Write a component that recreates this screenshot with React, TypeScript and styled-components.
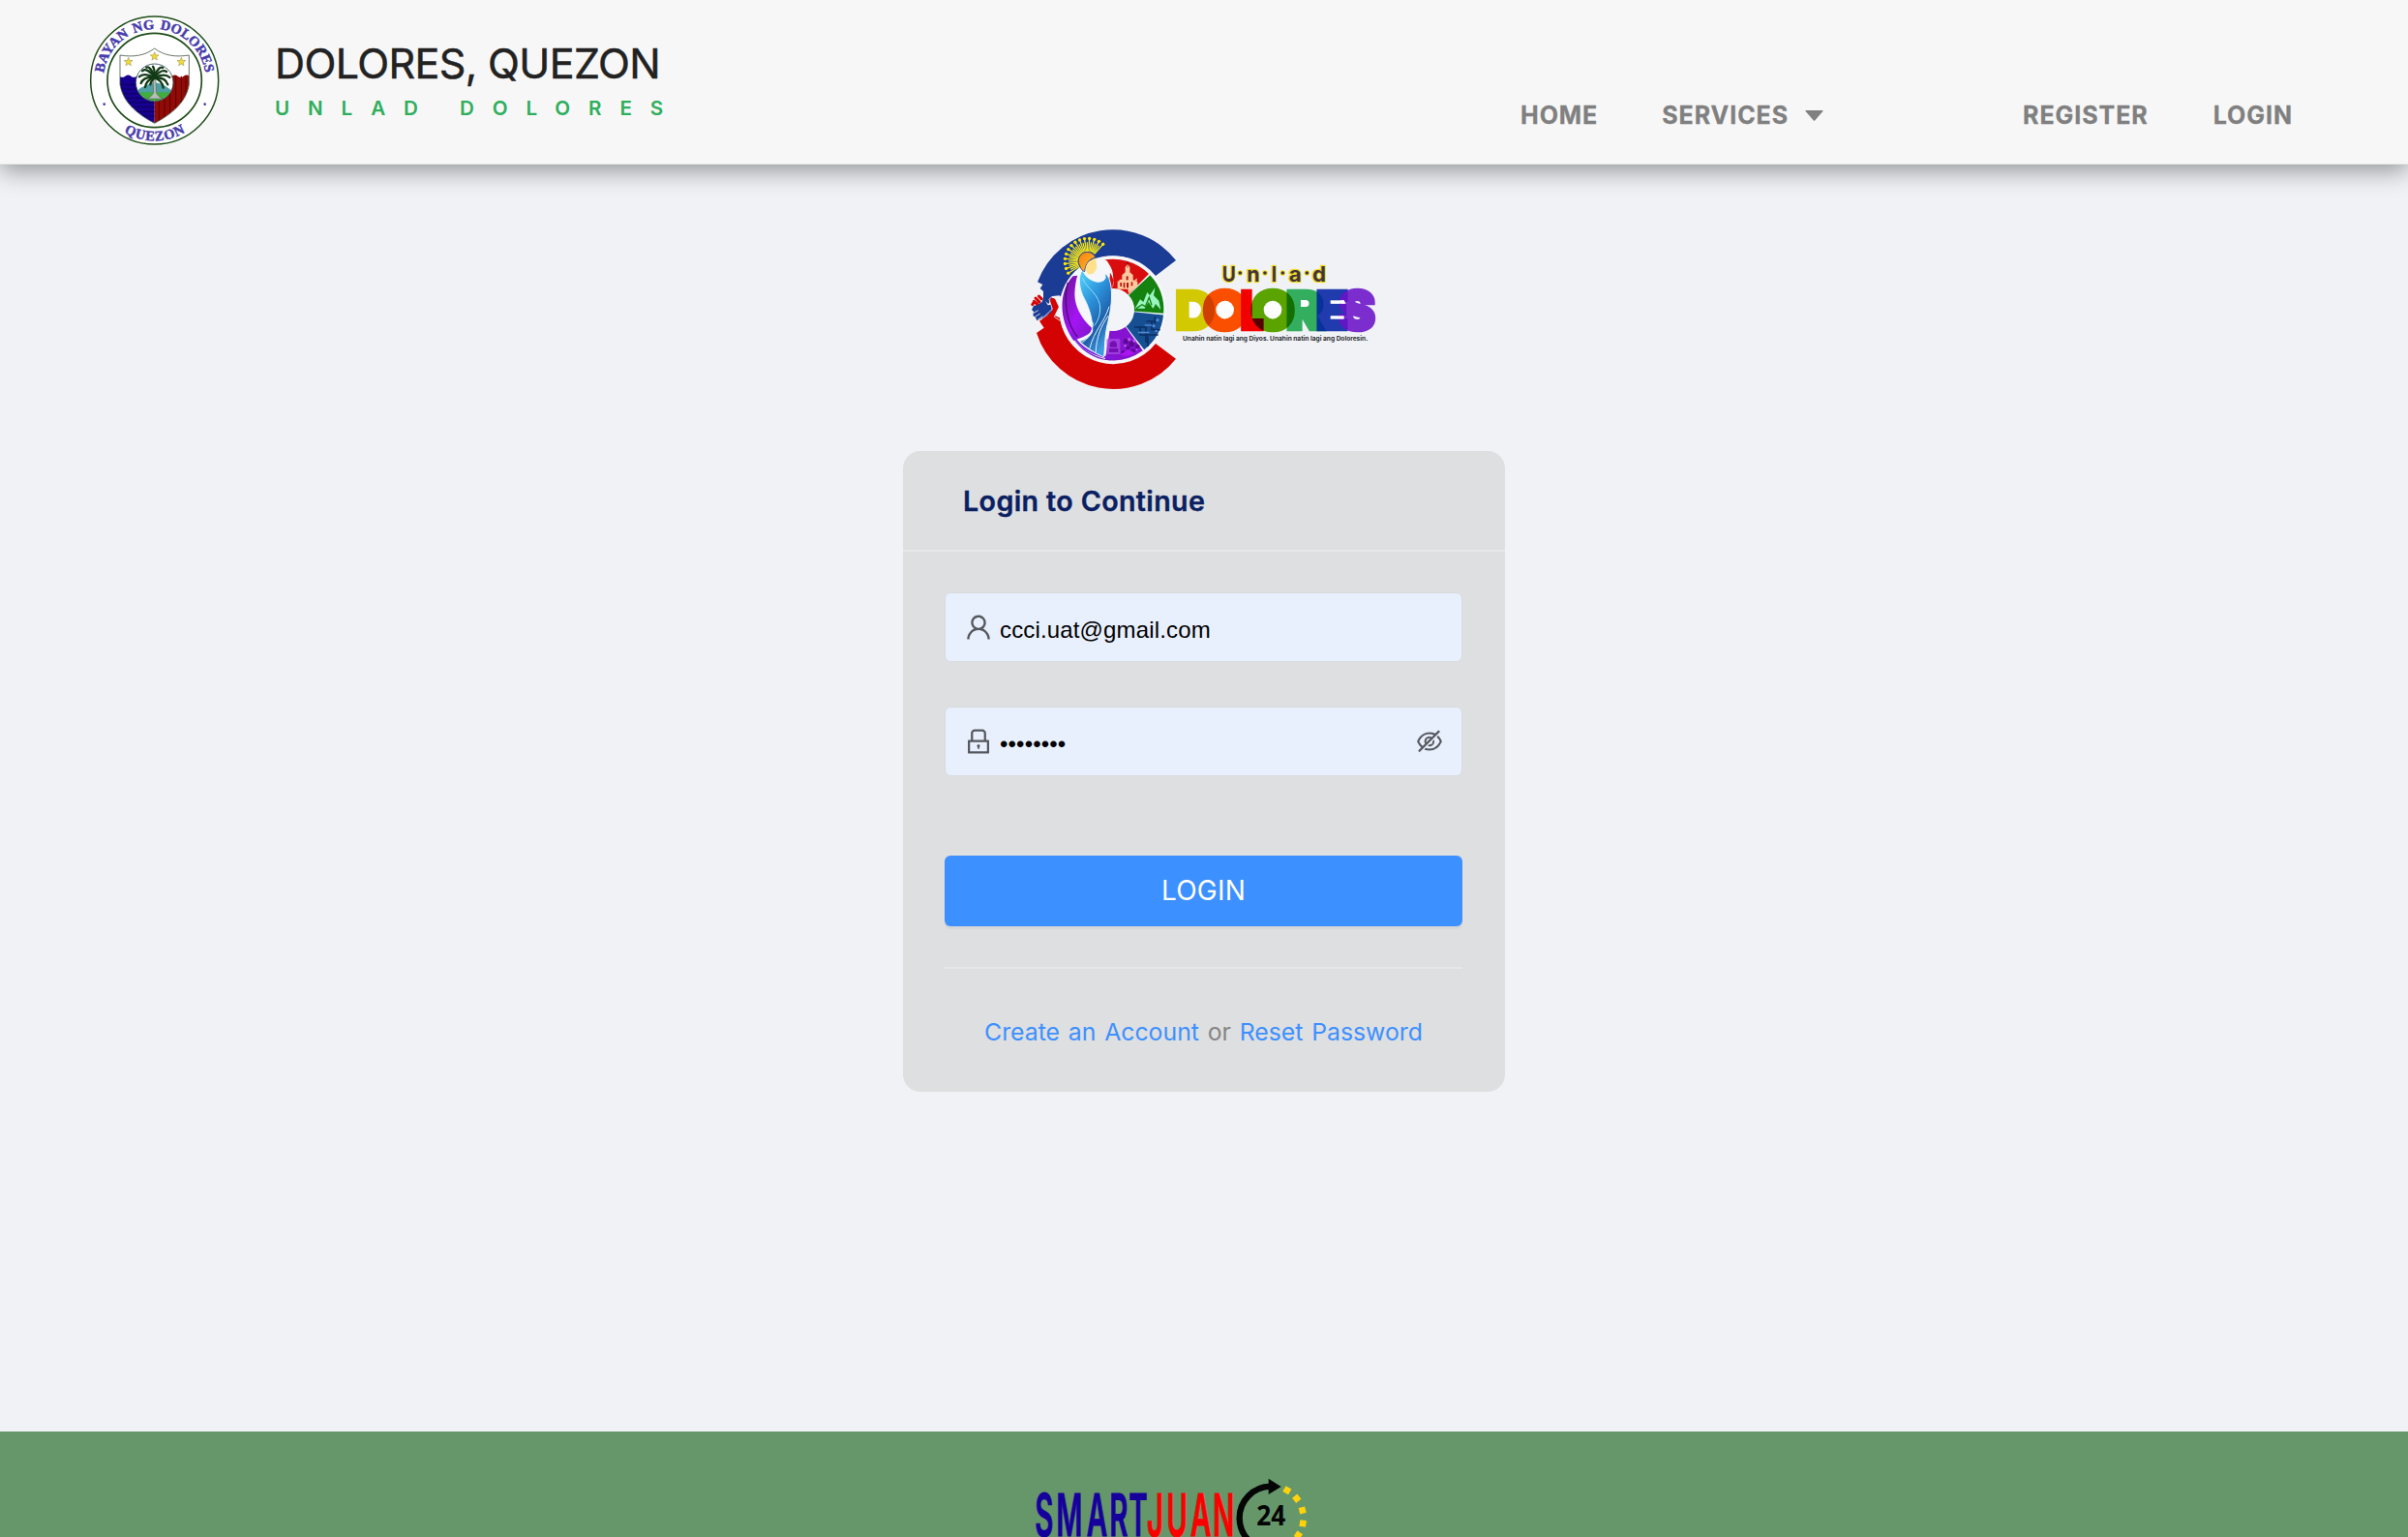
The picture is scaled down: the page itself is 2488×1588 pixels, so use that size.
import React, { useState } from "react";
import styled, { createGlobalStyle } from "styled-components";
import { AiOutlineEyeInvisible, AiOutlineLock, AiOutlineUser } from "react-icons/ai";

const GlobalStyle = createGlobalStyle`
  *, *::before, *::after { box-sizing: border-box; }
  body {
    margin: 0;
    background: #f0f2f6;
    font-family: Inter, "Liberation Sans", sans-serif;
    -webkit-font-smoothing: antialiased;
  }
`;

const Page = styled.div`
  display: flex;
  flex-direction: column;
  height: 1588px;
  overflow: hidden;
`;

const Header = styled.header`
  display: flex;
  align-items: flex-start;
  height: 170px;
  flex: none;
  padding: 0 119px 0 80px;
  background: #f7f7f7;
  border-bottom: 1px solid #e6e6e6;
  box-shadow: 0 6px 24px rgba(0, 0, 0, 0.4);
  z-index: 1;
`;

const Brand = styled.div`
  display: flex;
  flex-direction: column;
  gap: 6px;
  padding-top: 40px;
  margin-left: 44px;
`;

const BrandTitle = styled.div`
  font-size: 43px;
  line-height: 50px;
  letter-spacing: -0.6px;
  color: #222;
  -webkit-text-stroke: 0.5px #222;
  white-space: nowrap;
`;

const BrandTagline = styled.div`
  font-size: 20.6px;
  font-weight: 600;
  line-height: 31px;
  letter-spacing: 18.9px;
  color: #2fae5c;
  white-space: nowrap;
`;

const Nav = styled.nav`
  display: flex;
  align-items: center;
  height: 40px;
  margin: 99px 0 0 auto;
`;

const NavLink = styled.a<{ $gap?: number }>`
  display: flex;
  align-items: center;
  gap: 17px;
  margin-left: ${(p) => p.$gap ?? 0}px;
  font-size: 25px;
  font-weight: 700;
  line-height: 40px;
  letter-spacing: 0.95px;
  color: #808080;
  -webkit-text-stroke: 0.3px #808080;
`;

const Main = styled.main`
  display: flex;
  flex: 1;
  flex-direction: column;
  align-items: center;
  padding-top: 50px;
`;

const Card = styled.section`
  width: 622px;
  margin-top: 46px;
  border-radius: 18px;
  background: #dedfe0;
`;

const CardHeader = styled.h1`
  height: 104px;
  margin: 0;
  padding-left: 62px;
  border-bottom: 2px solid #e6e7e8;
  font-size: 28.6px;
  font-weight: 600;
  line-height: 103px;
  letter-spacing: 0.4px;
  color: #0b1f63;
  -webkit-text-stroke: 0.4px #0b1f63;
`;

const CardBody = styled.form`
  display: flex;
  flex-direction: column;
  padding: 42px 44px 42px 43px;
`;

const Field = styled.label`
  display: flex;
  align-items: center;
  height: 72px;
  margin: 0 0 46px;
  padding: 0 18px;
  border: 1px solid #d9dbdc;
  border-radius: 6px;
  background: #e8effd;
  color: #55585d;
`;

const TextInput = styled.input`
  flex: 1;
  min-width: 0;
  height: 40px;
  margin-left: 6px;
  padding: 5px 0 0;
  border: 0;
  outline: 0;
  background: transparent;
  color: #000;
  font: 24px "Liberation Sans", sans-serif;
  letter-spacing: 0.15px;
`;

const Submit = styled.button`
  height: 73px;
  margin-top: 36px;
  padding: 0;
  border: 0;
  border-radius: 6px;
  background: #3d90ff;
  box-shadow: 0 3px 1px rgba(0, 0, 0, 0.045);
  color: #fff;
  font: 400 28px/73px Inter, sans-serif;
  letter-spacing: 0.2px;
`;

const Divider = styled.hr`
  width: 100%;
  height: 2px;
  margin: 42px 0 45px;
  border: 0;
  background: #e6e7e8;
`;

const Links = styled.div`
  font-size: 24.8px;
  line-height: 40px;
  text-align: center;
  color: #858585;
  word-spacing: 1.8px;
`;

const TextLink = styled.a`
  color: #3d90ff;
`;

const Footer = styled.footer`
  display: flex;
  justify-content: center;
  height: 109px;
  flex: none;
  background: #66976b;
`;

const Art = styled.svg`
  display: block;
  flex: none;
`;

function star(cx: number, cy: number, r: number) {
  return Array.from({ length: 10 }, (_, i) => {
    const a = -Math.PI / 2 + (i * Math.PI) / 5;
    const k = i % 2 ? r * 0.42 : r;
    return `${(cx + k * Math.cos(a)).toFixed(1)},${(cy + k * Math.sin(a)).toFixed(1)}`;
  }).join(" ");
}

const SHIELD =
  "M132 171 C175 178 210 172 239 150 C268 172 303 178 346 171 V262 C338 312 300 350 239 382 C178 350 140 312 132 262 Z";

function TownSeal() {
  return (
    <Art width="160" height="169" viewBox="0 0 480 507" role="img">
      <defs>
        <path id="sealTop" d="M80 249 A159 159 0 0 1 398 249" />
        <path id="sealBottom" d="M52 249 A187 187 0 0 0 426 249" />
        <clipPath id="shieldClip"><path d={SHIELD} /></clipPath>
        <clipPath id="medalClip"><circle cx="239" cy="256" r="57" /></clipPath>
      </defs>
      <circle cx="239" cy="249" r="198" fill="#fff" stroke="#1f4d19" strokeWidth="4.5" />
      <circle cx="239" cy="249" r="146" fill="#fff" stroke="#1f4d19" strokeWidth="5" />
      <g fill="#473cab" stroke="#473cab" strokeWidth="1.4" fontFamily="'Liberation Serif', serif" fontWeight="700" fontSize="43">
        <text textAnchor="middle" wordSpacing="6">
          <textPath href="#sealTop" startOffset="50%">BAYAN NG DOLORES</textPath>
        </text>
        <text textAnchor="middle" letterSpacing="2.5">
          <textPath href="#sealBottom" startOffset="50.3%">QUEZON</textPath>
        </text>
      </g>
      <circle cx="83" cy="323" r="4" fill="#473cab" />
      <circle cx="395" cy="323" r="4" fill="#473cab" />
      <g clipPath="url(#shieldClip)">
        <rect x="130" y="148" width="218" height="236" fill="#fff" />
        <path d="M130 236 q9 7 18 0 t18 0 t18 0 t18 0 t18 0 t19 0 V384 H130 Z" fill="#17008f" />
        <path d="M239 236 q9 7 18 0 t18 0 t18 0 t18 0 t18 0 t19 0 V384 H239 Z" fill="#930b06" />
        <g stroke="#0b0052" strokeWidth="2.5">
          {[262, 276, 290, 304, 318, 332, 346, 360].map((y) => (
            <line key={y} x1="130" x2="239" y1={y} y2={y} />
          ))}
        </g>
        <g stroke="#5a0502" strokeWidth="3">
          {[253, 270, 287, 305, 322, 336].map((x) => (
            <line key={x} y1="236" y2="384" x1={x} x2={x} />
          ))}
        </g>
      </g>
      <path d={SHIELD} fill="none" stroke="#4c5a4c" strokeWidth="2.5" />
      {[[158, 192], [239, 175], [322, 192]].map(([x, y]) => (
        <polygon key={x} points={star(x, y, 14)} fill="#f5db2c" stroke="#8c8450" strokeWidth="1.5" />
      ))}
      <circle cx="239" cy="256" r="58" fill="#fff" />
      <g clipPath="url(#medalClip)">
        <path d="M180 286 L196 272 L214 264 L236 254 L252 258 L272 266 L300 286 V290 H180 Z" fill="#4f9fa5" />
        <rect x="180" y="286" width="120" height="34" fill="#3fae3c" />
        <path d="M215 306 Q232 300 236 286 L234 226 H242 L244 286 Q248 300 266 306 Z" fill="#b9bfb6" stroke="#4d554c" strokeWidth="1.5" />
      </g>
      <circle cx="239" cy="256" r="58" fill="none" stroke="#2b4a55" strokeWidth="2.5" />
      <g fill="none" stroke="#123a16" strokeWidth="7" strokeLinecap="round">
        <path d="M239 238 Q214 208 201 220" />
        <path d="M239 236 Q225 204 214 209" />
        <path d="M239 236 Q240 216 234 206" />
        <path d="M239 236 Q252 204 265 210" />
        <path d="M239 238 Q262 212 276 222" />
        <path d="M239 240 Q204 224 192 238" />
        <path d="M239 240 Q272 226 286 240" />
        <path d="M239 241 Q206 236 197 258" />
        <path d="M239 241 Q272 238 280 262" />
        <path d="M239 241 Q214 246 210 270" />
        <path d="M239 241 Q262 248 266 272" />
        <path d="M239 241 Q226 254 226 262" />
      </g>
    </Art>
  );
}

const WORD: { ch: string; x: number; w: number; fill: string; over?: boolean }[] = [
  { ch: "D", x: 44, w: 119, fill: "#d3c903" },
  { ch: "O", x: 130, w: 134, fill: "#fb4f00" },
  { ch: "L", x: 246, w: 69, fill: "#f40000" },
  { ch: "O", x: 279, w: 133, fill: "#5ba400" },
  { ch: "R", x: 388, w: 114, fill: "#33ae5f" },
  { ch: "E", x: 481, w: 97, fill: "#0322a3", over: true },
  { ch: "S", x: 551, w: 110, fill: "#6b12c9", over: true },
];

const UNLAD: [string, number, number][] = [
  ["U", 188, 42], ["n", 265, 40], ["l", 341, 16], ["a", 395, 39], ["d", 468, 42],
];

function polar(cx: number, cy: number, r: number, deg: number): [number, number] {
  const a = (deg * Math.PI) / 180;
  return [cx + r * Math.cos(a), cy + r * Math.sin(a)];
}

function wedge(from: number, to: number) {
  const [ax, ay] = polar(300, 300, 157, from);
  const [bx, by] = polar(300, 300, 157, to);
  const [cx, cy] = polar(300, 300, 65, to);
  const [dx, dy] = polar(300, 300, 65, from);
  return `M${ax} ${ay} A157 157 0 0 1 ${bx} ${by} L${cx} ${cy} A65 65 0 0 0 ${dx} ${dy} Z`;
}

function UnladDoloresLogo() {
  return (
    <Art width="388" height="200" viewBox="0 0 1164 600" role="img">
      <defs>
        <linearGradient id="robe" x1="0" y1="0" x2="0.5" y2="1">
          <stop offset="0" stopColor="#55d9ff" />
          <stop offset="0.45" stopColor="#2a8fd8" />
          <stop offset="0.75" stopColor="#1f5fa8" />
          <stop offset="1" stopColor="#3f9be0" />
        </linearGradient>
        <linearGradient id="veil" x1="0" y1="0" x2="1" y2="1">
          <stop offset="0" stopColor="#6a1494" />
          <stop offset="0.55" stopColor="#a514f5" />
          <stop offset="1" stopColor="#7a16c4" />
        </linearGradient>
        <linearGradient id="halo" x1="0" y1="0" x2="1" y2="1">
          <stop offset="0" stopColor="#f77f0c" />
          <stop offset="1" stopColor="#ffc02e" />
        </linearGradient>
      </defs>

      <path d="M495 147 A249 249 0 0 0 66 214 L82 222 L74 234 L84 243 L84 268 L100 282 L112 258 L134 256 L140 262 A167 167 0 0 1 432 195 Z" fill="#1b3c94" />
      <path d="M495 452 A249 249 0 0 1 63 372 L86 356 L72 335 L96 318 L112 300 L104 276 L108 262 L120 266 L132 292 L120 318 L136 326 A167 167 0 0 0 432 405 Z" fill="#d40303" />
      <path d="M84 262 L98 286 L110 284 L110 306 L84 326 L64 334 L60 324 L52 318 L54 306 L48 300 L54 288 L66 284 L80 276 Z" fill="#1b3c94" />
      <g stroke="#f0f2f6" strokeWidth="2.5" fill="none">
        <path d="M54 310 L68 302 M58 322 L74 312 M66 332 L82 320" />
        <path d="M112 258 L102 268 L112 298 L86 322 L72 332 M134 290 L118 322 L136 334" />
      </g>
      <g stroke="#d40303" strokeWidth="9" strokeLinecap="round">
        <path d="M50 284 L56 276 M55 274 L65 282 M60 264 L72 276 M70 258 L78 266" />
      </g>

      <circle cx="299" cy="299" r="166" fill="#f6f7fa" />
      <path d={wedge(-103, -45)} fill="#d90d0d" />
      <path d={wedge(-43, 4)} fill="#15820f" />
      <path d={wedge(6, 52)} fill="#174f93" />
      <path d={wedge(54, 99)} fill="#8613cf" />
      <g fill="#ffc9a0">
        <path d="M314 236 V212 L328 206 V192 L338 184 V168 L345 158 L352 168 V184 L362 192 V208 L376 214 V226 L348 250 L346 236 L338 236 Z" />
        <path d="M312 214 h8 v-8 h6 v10 z M366 210 l8 -8 v10 z" />
      </g>
      <g fill="#b3150f">
        <rect x="341" y="196" width="6" height="12" />
        <rect x="322" y="216" width="5" height="12" />
        <rect x="332" y="216" width="5" height="16" />
        <rect x="342" y="216" width="6" height="16" />
        <rect x="356" y="214" width="5" height="12" />
      </g>
      <path d="M345 150 V170 M340 156 H350" stroke="#7a0d0d" strokeWidth="2" />
      <path d="M368 296 L384 268 L394 276 L406 246 L414 256 L430 232 L426 256 L442 272 L448 300 L432 282 L424 296 L410 276 L398 296 Z" fill="#9af5c0" />
      <path d="M372 296 L390 284 L400 290 L412 262 L420 286" fill="none" stroke="#15820f" strokeWidth="4" />
      <g fill="none" stroke="#0d2f66" strokeWidth="5">
        <path d="M366 354 H402 V402 M384 354 V378 H440 M420 334 V362 H446 M408 382 V414 M404 336 H430 M430 322 V344" />
      </g>
      <g fill="#4b8ad0">
        <rect x="378" y="368" width="34" height="5" />
        <rect x="398" y="346" width="22" height="4" />
        <circle cx="438" cy="332" r="5" />
        <circle cx="426" cy="350" r="5" />
        <circle cx="434" cy="366" r="4" />
      </g>
      <rect x="280" y="390" width="42" height="48" rx="4" fill="#a950e4" opacity="0.7" />
      <path d="M288 420 H316 V432 H288 Z M290 404 q12 -14 22 0 v12 h-22 z" fill="#7410b3" />
      <g fill="#5b0a94">
        <circle cx="340" cy="398" r="8" />
        <circle cx="358" cy="406" r="9" />
        <circle cx="376" cy="414" r="7" />
        <circle cx="346" cy="418" r="7" />
        <circle cx="332" cy="432" r="6" />
        <circle cx="362" cy="428" r="7" />
      </g>
      <path d="M322 440 L346 422 L368 434 L346 444 Z" fill="#a914f0" />
      <g fill="#bb55f2">
        <circle cx="350" cy="392" r="5" />
        <circle cx="366" cy="396" r="5" />
        <circle cx="338" cy="412" r="4" />
        <circle cx="374" cy="424" r="3" />
      </g>
      <circle cx="300" cy="300" r="66" fill="#f2f4f8" />

      <path d="M176 196 C132 240 130 330 178 396 C196 388 232 380 236 358 C206 330 176 290 182 236 C184 218 186 204 190 194 Z" fill="url(#veil)" />
      <path d="M160 216 C146 270 156 346 190 384" fill="none" stroke="#4d0c78" strokeWidth="4" />
      <path d="M144 290 C146 390 226 452 300 456 C236 462 150 402 144 290 Z" fill="#6a16c0" />
      <path d="M170 372 C200 424 244 446 304 450" fill="none" stroke="#7c1ce0" strokeWidth="6" />
      <path d="M268 146 C240 150 246 214 270 214 C292 214 298 190 280 176 C300 188 306 216 298 234 C306 190 298 156 268 146 Z" fill="#f4f6fa" />
      <ellipse cx="264" cy="178" rx="28" ry="36" fill="#f4f6fa" />
      <path d="M206 176 C190 196 194 236 212 268 C228 298 238 336 236 366 C230 384 214 392 196 398 C214 414 246 438 272 446 C276 406 274 380 284 340 C294 300 300 252 292 218 C288 202 284 190 274 190 C284 208 262 218 244 212 C226 206 212 196 206 176 Z" fill="url(#robe)" stroke="#eef6fc" strokeWidth="3" />
      <path d="M288 290 C276 334 240 366 228 420 M286 318 C262 352 250 380 246 434 M238 340 C236 372 222 392 202 402" fill="none" stroke="#d9f1ff" strokeWidth="3" />
      <path d="M206 202 C216 236 262 250 260 300 C258 326 250 338 242 350" fill="none" stroke="#8fdcff" strokeWidth="3" />

      <g stroke="#f5e81a" strokeWidth="3.8" strokeLinecap="round">
        {Array.from({ length: 27 }, (_, i) => {
          const deg = 149 + i * 6.25;
          const [x1, y1] = polar(222, 150, 32, deg);
          const [x2, y2] = polar(222, 150, i % 2 ? 58 : 68, deg);
          return <line key={i} x1={x1} y1={y1} x2={x2} y2={y2} />;
        })}
      </g>
      <g fill="#ffe600">
        {Array.from({ length: 14 }, (_, i) => {
          const [x, y] = polar(222, 150, 71, 149 + i * 12.5);
          return <circle key={i} cx={x} cy={y} r="5" />;
        })}
      </g>
      <path d="M198 166 A28 28 0 1 1 246 138 C226 142 214 158 212 182 C206 180 200 174 198 166 Z" fill="url(#halo)" stroke="#27418f" strokeWidth="2.5" />
      <path d="M246 140 C222 146 208 170 220 186 C232 198 248 184 250 166 Z" fill="#ffe18c" />

      <g transform="translate(450 120)">
        <g fontFamily="Inter, sans-serif" fontWeight="700" fontSize="65" fill="#43353a" stroke="#f0dc23" strokeWidth="7" strokeLinejoin="round" paintOrder="stroke">
          {UNLAD.map(([ch, x, w]) => (
            <text key={ch} x={x} y="93" textLength={w} lengthAdjust="spacingAndGlyphs">{ch}</text>
          ))}
          {[244, 321, 376, 451].map((x) => (
            <circle key={x} cx={x} cy="66" r="5.5" strokeWidth="6" />
          ))}
        </g>
        <g fontFamily="Inter, sans-serif" fontWeight="900" fontSize="162" strokeWidth="14" style={{ isolation: "isolate" }}>
          {WORD.map(({ ch, x, w, fill, over }, i) => (
            <text
              key={i}
              x={x}
              y="239"
              textLength={w}
              lengthAdjust="spacingAndGlyphs"
              fill={fill}
              stroke={fill}
              opacity={over ? 0.88 : 1}
              style={{ mixBlendMode: over ? "normal" : "multiply" }}
            >
              {ch}
            </text>
          ))}
        </g>
        <g fill="#fdfdfe">
          <circle cx="197" cy="180" r="28" />
          <circle cx="345" cy="180" r="28" />
          <path d="M86 155 H98 A25 25 0 0 1 98 205 H86 Z" />
          <path d="M432 150 H447 A10 10 0 0 1 447 171 H432 Z" />
          <rect x="524" y="151" width="42" height="10" />
          <rect x="524" y="199" width="42" height="10" />
          <path d="M566 151 H556 V161 H572 Z" />
        </g>
        <text x="66" y="277" textLength="574" lengthAdjust="spacingAndGlyphs" fontFamily="Inter, sans-serif" fontWeight="700" fontSize="19.5" fill="#2d2d30">
          Unahin natin lagi ang Diyos. Unahin natin lagi ang Doloresin.
        </text>
      </g>
    </Art>
  );
}

const SQUEEZE = 0.49;
const at = (xs: number[]) => xs.map((x) => (x / SQUEEZE).toFixed(1)).join(" ");

function SmartJuanLogo() {
  return (
    <Art width="408" height="160" viewBox="0 57 1224 480" role="img">
      <g fontFamily="Inter, sans-serif" fontWeight="600" fontSize="180" strokeWidth="3" transform={`scale(${SQUEEZE} 1)`}>
        <text x={at([88, 154, 248, 319, 379])} y="381" fill="#16009c" stroke="#16009c">SMART</text>
        <text x={at([435, 496, 570, 639])} y="381" fill="#fb0000" stroke="#fb0000">JUAN</text>
      </g>
      <path d="M818 227 A98 98 0 1 0 822 423" fill="none" stroke="#050505" strokeWidth="19" />
      <path d="M812 203 L851 228 L812 252 Z" fill="#050505" />
      {[-61, -38, -14, 10, 33, 56, 79].map((deg) => (
        <rect key={deg} x="910" y="315" width="20" height="20" fill="#ffd20a" transform={`rotate(${deg} 822 325)`} />
      ))}
      <text x="775" y="348" textLength="90" lengthAdjust="spacingAndGlyphs" fontFamily="'Open Sans', sans-serif" fontWeight="700" fontSize="85" fill="#050505">24</text>
    </Art>
  );
}

export default function App() {
  const [email, setEmail] = useState("ccci.uat@gmail.com");
  const [password, setPassword] = useState("password");
  return (
    <Page>
      <GlobalStyle />
      <Header>
        <TownSeal />
        <Brand>
          <BrandTitle>DOLORES, QUEZON</BrandTitle>
          <BrandTagline>UNLAD DOLORES</BrandTagline>
        </Brand>
        <Nav>
          <NavLink>HOME</NavLink>
          <NavLink $gap={66}>
            SERVICES
            <svg width="19" height="11" viewBox="0 0 19 11">
              <path d="M1 0 H18 Q19 0 18.4 1 L10.2 10.4 Q9.5 11 8.8 10.4 L0.6 1 Q0 0 1 0 Z" fill="#808080" />
            </svg>
          </NavLink>
          <NavLink $gap={206}>REGISTER</NavLink>
          <NavLink $gap={67}>LOGIN</NavLink>
        </Nav>
      </Header>
      <Main>
        <UnladDoloresLogo />
        <Card>
          <CardHeader>Login to Continue</CardHeader>
          <CardBody onSubmit={(e) => e.preventDefault()}>
            <Field>
              <AiOutlineUser size={32} />
              <TextInput type="text" value={email} onChange={(e) => setEmail(e.target.value)} />
            </Field>
            <Field>
              <AiOutlineLock size={32} />
              <TextInput type="password" value={password} onChange={(e) => setPassword(e.target.value)} />
              <AiOutlineEyeInvisible size={30} />
            </Field>
            <Submit type="submit">LOGIN</Submit>
            <Divider />
            <Links>
              <TextLink>Create an Account</TextLink> or <TextLink>Reset Password</TextLink>
            </Links>
          </CardBody>
        </Card>
      </Main>
      <Footer>
        <SmartJuanLogo />
      </Footer>
    </Page>
  );
}
